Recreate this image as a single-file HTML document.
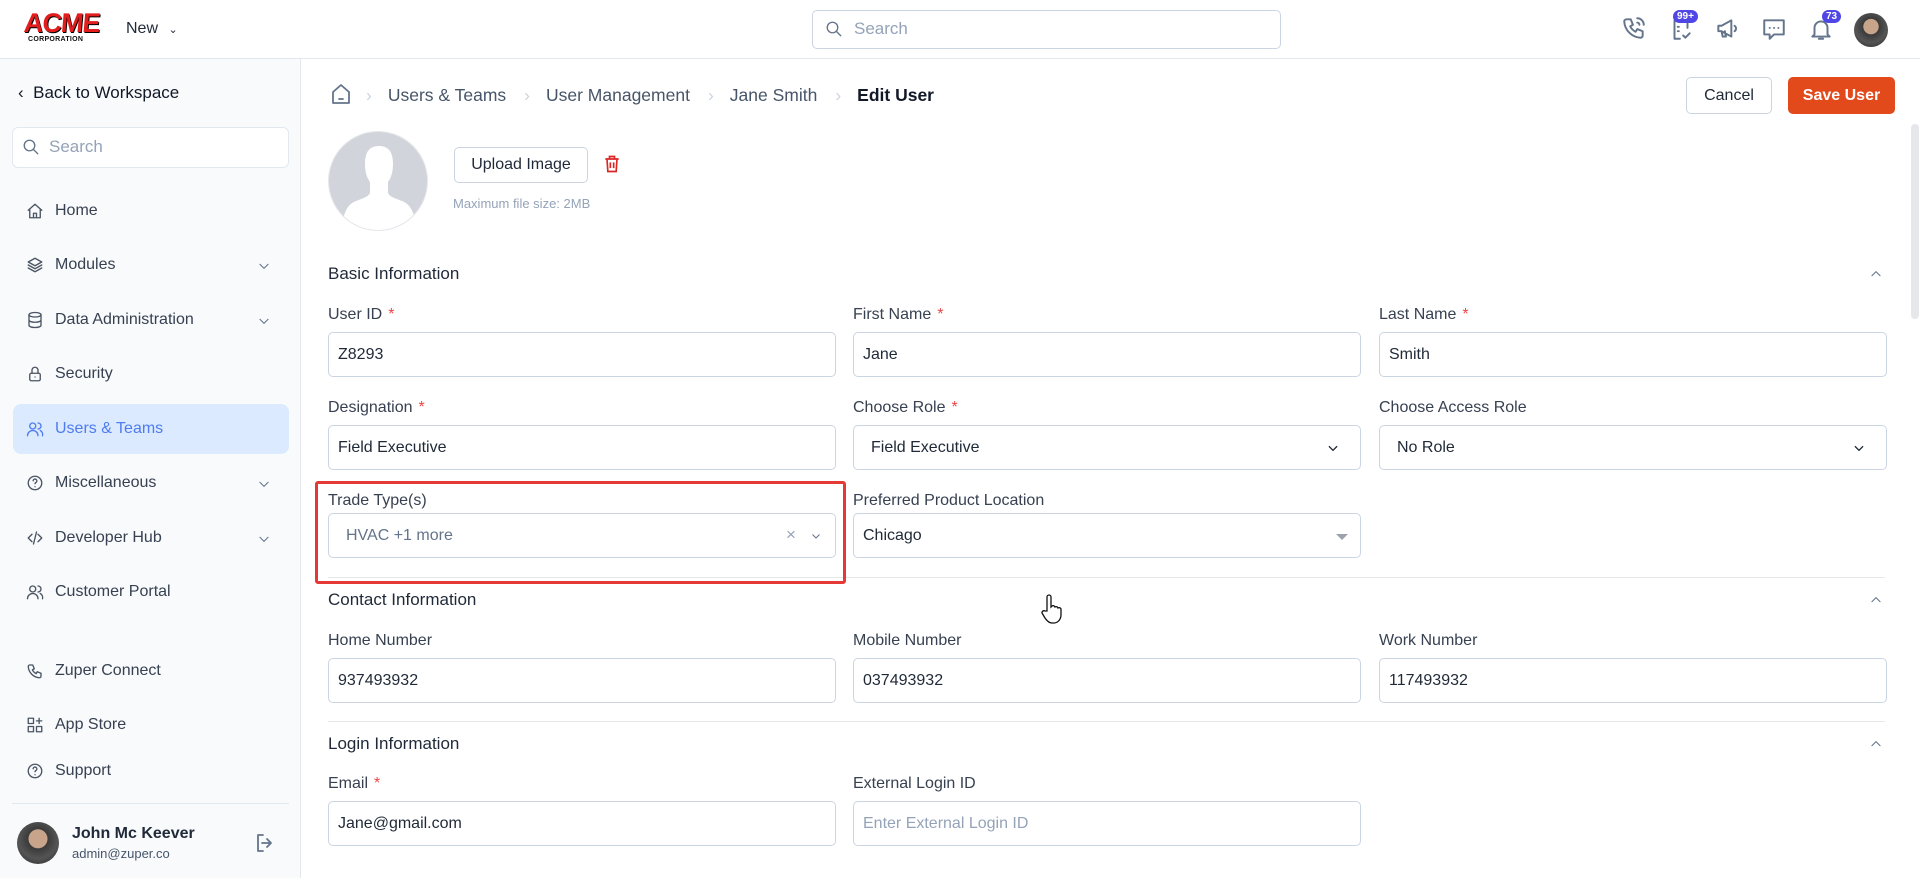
<!DOCTYPE html>
<html><head><meta charset="utf-8"><style>
*{box-sizing:border-box;margin:0;padding:0}
body{width:1920px;height:878px;overflow:hidden;background:#fff;font-family:"Liberation Sans",Arial,sans-serif;color:#1f2937;position:relative}
.a{position:absolute}
.hdr{left:0;top:0;width:1920px;height:59px;border-bottom:1px solid #e2e8f0;background:#fff}
.side{left:0;top:59px;width:301px;height:819px;background:#f8fafc;border-right:1px solid #e5e7eb}
.nav{left:26px;font-size:16px;color:#374151;display:flex;align-items:center;gap:11px}
.nav svg{width:18px;height:18px;fill:none;stroke:#4b5563;stroke-width:1.8;stroke-linecap:round;stroke-linejoin:round}
.chev{left:257px;width:14px;height:14px}
.lbl{font-size:16px;color:#374151}
.lbl b{color:#ef4444;font-weight:normal;margin-left:6px}
.inp{height:45px;border:1px solid #cbd5e1;border-radius:5px;font-size:16px;color:#1f2937;padding-left:9px;display:flex;align-items:center;background:#fff}
.sec{font-size:17px;color:#1f2937;left:328px}
.up{left:1869px;width:14px;height:14px}
.div{left:328px;width:1557px;height:1px;background:#e5e7eb}
.ic{fill:none;stroke:#64748b;stroke-width:1.8;stroke-linecap:round;stroke-linejoin:round}
.sep{color:#cbd5e1;margin:0 16px 0 18px}
</style></head><body>
<div class="a hdr"></div>
<div class="a" style="left:24px;top:11px;font-family:'Liberation Sans';font-weight:bold;font-size:27px;color:#e11d1d;letter-spacing:-1px;transform:skew(-5deg);line-height:24px;text-shadow:1px 1px 0 #000">ACME</div>
<div class="a" style="left:28px;top:36px;font-size:7px;font-weight:bold;letter-spacing:0.3px;color:#111">CORPORATION</div>
<div class="a" style="left:126px;top:20px;font-size:16px;color:#1f2937">New <span style="font-size:11px;margin-left:6px">&#8964;</span></div>
<div class="a" style="left:812px;top:10px;width:469px;height:39px;border:1px solid #cbd5e1;border-radius:5px"></div>
<svg class="a" style="left:825px;top:20px" width="18" height="18" viewBox="0 0 24 24"><circle cx="10" cy="10" r="7" class="ic"/><path d="M15 15l6 6" class="ic"/></svg>
<div class="a" style="left:854px;top:19px;font-size:17px;color:#94a3b8">Search</div>
<svg class="a" style="left:1621px;top:15px" width="26" height="26" viewBox="0 0 24 24"><path class="ic" d="M5 4h4l2 5-2.5 1.5a11 11 0 005 5L15 13l5 2v4a2 2 0 01-2 2A16 16 0 013 6a2 2 0 012-2M15 3a6 6 0 016 6M15 7a2 2 0 012 2"/></svg>
<svg class="a" style="left:1668px;top:16px" width="26" height="26" viewBox="0 0 24 24"><path class="ic" d="M9 4H6v17h5M18 11V4h-3M9 10h1M9 14h1M14 18l2 2 4-4"/></svg>
<div class="a" style="left:1673px;top:10px;background:#4f46e5;color:#fff;font-size:10px;font-weight:bold;border-radius:8px;padding:1px 4px">99+</div>
<svg class="a" style="left:1714px;top:16px" width="26" height="26" viewBox="0 0 24 24"><path class="ic" d="M4 9v5h3l9 5V4L7 9H4zM7 14l1 5h3l-1-5M19 9a3 3 0 010 5"/></svg>
<svg class="a" style="left:1760px;top:16px" width="28" height="26" viewBox="0 0 24 24"><path class="ic" d="M3 4h18v13h-9l-4 4v-4H3z"/><path d="M8 11h.1M12 11h.1M16 11h.1" class="ic" stroke-width="2.5"/></svg>
<svg class="a" style="left:1808px;top:16px" width="26" height="26" viewBox="0 0 24 24"><path class="ic" d="M6 17V11a6 6 0 0112 0v6l2 2H4zM10 21h4"/></svg>
<div class="a" style="left:1822px;top:10px;background:#4f46e5;color:#fff;font-size:10px;font-weight:bold;border-radius:8px;padding:1px 4px">73</div>
<div class="a" style="left:1854px;top:13px;width:34px;height:34px;border-radius:50%;background:radial-gradient(circle at 50% 40%,#c8a58a 0 28%,#3a3a3a 30%,#555 60%,#222 100%)"></div>
<div class="a side"></div>
<div class="a" style="left:18px;top:83px;font-size:17px;color:#111827">&#8249;&nbsp; Back to Workspace</div>
<div class="a" style="left:12px;top:127px;width:277px;height:41px;border:1px solid #e2e8f0;border-radius:6px;background:#fff"></div>
<svg class="a" style="left:22px;top:138px" width="18" height="18" viewBox="0 0 24 24"><circle cx="10" cy="10" r="7" class="ic"/><path d="M15 15l6 6" class="ic"/></svg>
<div class="a" style="left:49px;top:137px;font-size:17px;color:#94a3b8">Search</div>
<div class="a" style="left:13px;top:404px;width:276px;height:50px;background:#dbeafe;border-radius:8px"></div>
<div class="a nav" style="top:202px"><svg viewBox="0 0 24 24"><path d="M3 11l9-8 9 8M5 9v12h14V9M10 21v-6h4v6"/></svg>Home</div>
<div class="a nav" style="top:256px"><svg viewBox="0 0 24 24"><path d="M12 3l9 5-9 5-9-5zM3 12l9 5 9-5M3 16l9 5 9-5"/></svg>Modules</div>
<div class="a nav" style="top:311px"><svg viewBox="0 0 24 24"><ellipse cx="12" cy="5" rx="8" ry="3"/><path d="M4 5v14c0 2 4 3 8 3s8-1 8-3V5M4 12c0 2 4 3 8 3s8-1 8-3"/></svg>Data Administration</div>
<div class="a nav" style="top:365px"><svg viewBox="0 0 24 24"><rect x="5" y="11" width="14" height="10" rx="2"/><path d="M8 11V7a4 4 0 018 0v4M12 16h.1"/></svg>Security</div>
<div class="a nav" style="top:420px;color:#4f7cf0"><svg viewBox="0 0 24 24" style="stroke:#4f7cf0"><circle cx="9" cy="8" r="4"/><path d="M2 21a7 7 0 0114 0M16 4a4 4 0 010 8M19 14a6 6 0 013 7"/></svg>Users &amp; Teams</div>
<div class="a nav" style="top:474px"><svg viewBox="0 0 24 24"><circle cx="12" cy="12" r="9"/><path d="M9.5 9a2.5 2.5 0 115 .5c0 1.5-2.5 2-2.5 3.5M12 17h.1"/></svg>Miscellaneous</div>
<div class="a nav" style="top:529px"><svg viewBox="0 0 24 24"><path d="M8 7l-5 5 5 5M16 7l5 5-5 5M14 4l-4 16"/></svg>Developer Hub</div>
<div class="a nav" style="top:583px"><svg viewBox="0 0 24 24"><circle cx="9" cy="8" r="4"/><path d="M2 21a7 7 0 0114 0M16 4a4 4 0 010 8M19 14a6 6 0 013 7"/></svg>Customer Portal</div>
<div class="a nav" style="top:662px"><svg viewBox="0 0 24 24"><path d="M5 4h4l2 5-2.5 1.5a11 11 0 005 5L15 13l5 2v4a2 2 0 01-2 2A16 16 0 013 6a2 2 0 012-2"/></svg>Zuper Connect</div>
<div class="a nav" style="top:716px"><svg viewBox="0 0 24 24"><rect x="3" y="3" width="7" height="7"/><rect x="3" y="14" width="7" height="7"/><rect x="14" y="14" width="7" height="7"/><path d="M17.5 3v7M14 6.5h7"/></svg>App Store</div>
<div class="a nav" style="top:762px"><svg viewBox="0 0 24 24"><circle cx="12" cy="12" r="9"/><path d="M9.5 9a2.5 2.5 0 115 .5c0 1.5-2.5 2-2.5 3.5M12 17h.1"/></svg>Support</div>
<svg class="a chev" style="top:259px" viewBox="0 0 24 24"><path d="M5 9l7 7 7-7" class="ic" stroke="#4b5563"/></svg>
<svg class="a chev" style="top:314px" viewBox="0 0 24 24"><path d="M5 9l7 7 7-7" class="ic"/></svg>
<svg class="a chev" style="top:477px" viewBox="0 0 24 24"><path d="M5 9l7 7 7-7" class="ic"/></svg>
<svg class="a chev" style="top:532px" viewBox="0 0 24 24"><path d="M5 9l7 7 7-7" class="ic"/></svg>
<div class="a" style="left:12px;top:803px;width:277px;height:1px;background:#e2e8f0"></div>
<div class="a" style="left:17px;top:822px;width:42px;height:42px;border-radius:50%;background:radial-gradient(circle at 50% 40%,#c8a58a 0 28%,#3a3a3a 30%,#555 60%,#222 100%)"></div>
<div class="a" style="left:72px;top:825px;font-size:16px;font-weight:bold;color:#1f2937">John Mc Keever</div>
<div class="a" style="left:72px;top:846px;font-size:13px;color:#475569">admin@zuper.co</div>
<svg class="a" style="left:253px;top:831px" width="24" height="24" viewBox="0 0 24 24"><path class="ic" d="M10 4H5v16h5M14 8l4 4-4 4M18 12H9"/></svg>
<svg class="a" style="left:329px;top:82px" width="24" height="24" viewBox="0 0 24 24"><path class="ic" stroke="#475569" d="M4 10l8-7 8 7v11H4zM10 17h4"/></svg>
<div class="a" style="left:348px;top:85px;font-size:17.5px;color:#475569;white-space:nowrap">
<span class="sep">&#8250;</span>Users &amp; Teams<span class="sep">&#8250;</span>User Management<span class="sep">&#8250;</span>Jane Smith<span class="sep">&#8250;</span><b style="color:#111827">Edit User</b></div>
<div class="a" style="left:1686px;top:77px;width:86px;height:37px;border:1px solid #cbd5e1;border-radius:5px;font-size:16px;color:#1f2937;display:flex;align-items:center;justify-content:center">Cancel</div>
<div class="a" style="left:1788px;top:77px;width:107px;height:37px;background:#e2491b;border-radius:5px;font-size:16px;font-weight:bold;color:#fff;display:flex;align-items:center;justify-content:center">Save User</div>
<div class="a" style="left:328px;top:131px;width:100px;height:100px;border-radius:50%;background:#d1d5db;overflow:hidden;border:1px solid #e5e7eb">
<svg width="100" height="100" viewBox="0 0 100 100"><path d="M50 14c-11 0-14 8-14 18 0 8 2 14 5 18v10c0 4-6 6-14 9-8 3-12 10-14 25v10h74V94c-2-15-6-22-14-25-8-3-14-5-14-9V50c3-4 5-10 5-18 0-10-3-18-14-18z" fill="#fff"/></svg></div>
<div class="a" style="left:454px;top:147px;width:134px;height:36px;border:1px solid #cbd5e1;border-radius:5px;font-size:16px;display:flex;align-items:center;justify-content:center">Upload Image</div>
<svg class="a" style="left:602px;top:153px" width="20" height="22" viewBox="0 0 24 24"><path d="M4 6h16M9 6V3h6v3M6 6l1 15h10l1-15M10 10v7M14 10v7" fill="none" stroke="#dc2626" stroke-width="2"/></svg>
<div class="a" style="left:453px;top:196px;font-size:13px;color:#94a3b8">Maximum file size: 2MB</div>
<div class="a sec" style="top:264px">Basic Information</div>
<svg class="a up" style="top:267px" viewBox="0 0 24 24"><path d="M5 15l7-7 7 7" class="ic" stroke="#1f2937"/></svg>
<div class="a lbl" style="left:328px;top:306px">User ID<b>*</b></div>
<div class="a lbl" style="left:853px;top:306px">First Name<b>*</b></div>
<div class="a lbl" style="left:1379px;top:306px">Last Name<b>*</b></div>
<div class="a inp" style="left:328px;top:332px;width:508px">Z8293</div>
<div class="a inp" style="left:853px;top:332px;width:508px">Jane</div>
<div class="a inp" style="left:1379px;top:332px;width:508px">Smith</div>
<div class="a lbl" style="left:328px;top:399px">Designation<b>*</b></div>
<div class="a lbl" style="left:853px;top:399px">Choose Role<b>*</b></div>
<div class="a lbl" style="left:1379px;top:399px">Choose Access Role</div>
<div class="a inp" style="left:328px;top:425px;width:508px">Field Executive</div>
<div class="a inp" style="left:853px;top:425px;width:508px;padding-left:17px">Field Executive</div>
<div class="a inp" style="left:1379px;top:425px;width:508px;padding-left:17px">No Role</div>
<svg class="a" style="left:1326px;top:441px" width="14" height="14" viewBox="0 0 24 24"><path d="M5 9l7 7 7-7" fill="none" stroke="#1f2937" stroke-width="2.2"/></svg>
<svg class="a" style="left:1852px;top:441px" width="14" height="14" viewBox="0 0 24 24"><path d="M5 9l7 7 7-7" fill="none" stroke="#1f2937" stroke-width="2.2"/></svg>
<div class="a lbl" style="left:328px;top:492px">Trade Type(s)</div>
<div class="a lbl" style="left:853px;top:492px">Preferred Product Location</div>
<div class="a inp" style="left:328px;top:513px;width:508px;padding-left:17px;color:#64748b">HVAC +1 more</div>
<div class="a" style="left:786px;top:525px;font-size:17px;color:#94a3b8">×</div>
<svg class="a" style="left:810px;top:530px" width="12" height="12" viewBox="0 0 24 24"><path d="M5 9l7 7 7-7" fill="none" stroke="#64748b" stroke-width="2"/></svg>
<div class="a inp" style="left:853px;top:513px;width:508px">Chicago</div>
<div class="a" style="left:1336px;top:534px;width:0;height:0;border-left:6px solid transparent;border-right:6px solid transparent;border-top:6px solid #9ca3af"></div>
<div class="a div" style="top:577px"></div>
<div class="a" style="left:315px;top:481px;width:531px;height:103px;border:3px solid #e53935;border-radius:3px"></div>
<div class="a sec" style="top:590px">Contact Information</div>
<svg class="a up" style="top:593px" viewBox="0 0 24 24"><path d="M5 15l7-7 7 7" class="ic" stroke="#1f2937"/></svg>
<div class="a lbl" style="left:328px;top:632px">Home Number</div>
<div class="a lbl" style="left:853px;top:632px">Mobile Number</div>
<div class="a lbl" style="left:1379px;top:632px">Work Number</div>
<div class="a inp" style="left:328px;top:658px;width:508px">937493932</div>
<div class="a inp" style="left:853px;top:658px;width:508px">037493932</div>
<div class="a inp" style="left:1379px;top:658px;width:508px">117493932</div>
<div class="a div" style="top:721px"></div>
<div class="a sec" style="top:734px">Login Information</div>
<svg class="a up" style="top:737px" viewBox="0 0 24 24"><path d="M5 15l7-7 7 7" class="ic" stroke="#1f2937"/></svg>
<div class="a lbl" style="left:328px;top:775px">Email<b>*</b></div>
<div class="a lbl" style="left:853px;top:775px">External Login ID</div>
<div class="a inp" style="left:328px;top:801px;width:508px">Jane@gmail.com</div>
<div class="a inp" style="left:853px;top:801px;width:508px;color:#94a3b8">Enter External Login ID</div>
<svg class="a" style="left:1040px;top:593px" width="24" height="32" viewBox="0 0 24 32"><path d="M7 18V4a2 2 0 014 0v10l1-1a2 2 0 013 1 2 2 0 013 1 2 2 0 013 1v6c0 4-3 8-7 8h-2c-3 0-5-2-7-5l-3-5a2 2 0 013-2z" fill="#fff" stroke="#111" stroke-width="1.3"/></svg>
<div class="a" style="left:1911px;top:124px;width:8px;height:195px;background:#e5e7eb;border-radius:4px"></div>
</body></html>
